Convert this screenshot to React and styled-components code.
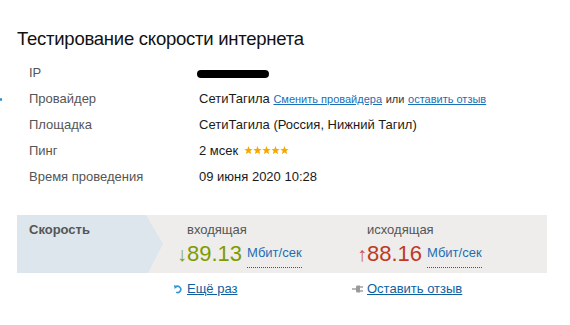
import React from "react";
import styled, { createGlobalStyle } from "styled-components";

const Global = createGlobalStyle`
  html, body { margin: 0; padding: 0; background: #fff; }
  body { font-family: "Liberation Sans", Arial, sans-serif; color: #222; }
`;

const Page = styled.div`
  position: relative;
  width: 570px;
  height: 325px;
  padding: 27px 0 0 17px;
  box-sizing: border-box;
`;

const EdgeDot = styled.span`
  position: absolute;
  left: 0;
  top: 98px;
  width: 2px;
  height: 3px;
  border-radius: 1px;
  background: #2a8fd0;
`;

const Title = styled.h1`
  margin: 0;
  font-size: 18.5px;
  letter-spacing: -0.25px;
  line-height: 24px;
  font-weight: normal;
  color: #111;
`;

const InfoTable = styled.div`
  display: grid;
  grid-template-columns: 170px 1fr;
  margin: 9px 0 0 12px;
`;

const Label = styled.div`
  font-size: 13px;
  line-height: 26px;
  color: #555;
`;

const Value = styled.div`
  font-size: 13px;
  line-height: 26px;
  color: #1a1a1a;
  white-space: nowrap;
`;

const Hidden = styled.span`
  display: inline-block;
  width: 72px;
  height: 8px;
  margin-left: -2px;
  border-radius: 4px;
  background: #000;
  vertical-align: -1px;
  filter: blur(0.4px);
`;

const SmallLink = styled.a`
  font-size: 11px;
  color: #1b6fb5;
  text-decoration: underline;
`;

const Small = styled.span`
  font-size: 11px;
  color: #333;
`;

const Stars = styled.svg`
  margin-left: 6px;
  vertical-align: 1px;
`;

const SpeedBox = styled.div`
  display: grid;
  grid-template-columns: 160px 180px 1fr;
  width: 530px;
  height: 58px;
  margin-top: 25px;
  background: #eeedeb;
`;

const SpeedLabel = styled.div`
  background: #dde5ed;
  clip-path: polygon(0 0, 129px 0, 146px 50%, 131px 100%, 0 100%);
  padding: 7px 0 0 12px;
  font-size: 13px;
  line-height: 16px;
  font-weight: bold;
  color: #555;
`;

const SpeedCell = styled.div`
  padding-top: 7px;
`;

const Caption = styled.div`
  padding-left: 10px;
  font-size: 13px;
  line-height: 16px;
  color: #555;
`;

const Reading = styled.div`
  margin-top: 3px;
  line-height: 26px;
  white-space: nowrap;
`;

const Arrow = styled.span`
  display: inline-block;
  width: 10px;
  font-size: 20px;
  line-height: 20px;
  color: ${(p) => p.$color};
`;

const Number = styled.span`
  font-size: 22px;
  color: ${(p) => p.$color};
`;

const Unit = styled.span`
  display: inline-block;
  margin-left: 5px;
  padding-bottom: 6px;
  font-size: 13px;
  line-height: 16px;
  color: #1b6fb5;
  border-bottom: 1px dotted #1b5f95;
  vertical-align: 4px;
`;

const LinksRow = styled.div`
  display: grid;
  grid-template-columns: 160px 180px 1fr;
  margin-top: 8px;
`;

const LinkItem = styled.div`
  grid-column: ${(p) => p.$col};
  display: flex;
  align-items: center;
  gap: ${(p) => p.$gap}px;
  margin-left: ${(p) => p.$shift}px;
`;

const ActionLink = styled.a`
  font-size: 13px;
  line-height: 16px;
  color: #0d5f9f;
  text-decoration: underline;
`;

function StarRow() {
  const star = (cx) => {
    const pts = [];
    for (let i = 0; i < 10; i++) {
      const r = i % 2 === 0 ? 4.4 : 1.9;
      const a = (Math.PI / 5) * i - Math.PI / 2;
      pts.push(`${(cx + r * Math.cos(a)).toFixed(2)},${(4.5 + r * Math.sin(a)).toFixed(2)}`);
    }
    return <polygon key={cx} points={pts.join(" ")} fill="#f6a800" />;
  };
  return (
    <Stars width="45" height="8" viewBox="0 0 45 8">
      {[4.5, 13.5, 22.5, 31.5, 40.5].map(star)}
    </Stars>
  );
}

function RefreshIcon() {
  return (
    <svg width="8" height="10" viewBox="0 0 8 10">
      <path d="M1.2 3.2 A3.2 3.2 0 1 1 2.2 8.3" fill="none" stroke="#2a9ad6" strokeWidth="1.6" />
      <polygon points="0,1 3.6,2.6 0.6,5" fill="#2a9ad6" />
    </svg>
  );
}

function PlugIcon() {
  return (
    <svg width="11" height="8" viewBox="0 0 11 8">
      <rect x="0" y="3.3" width="4" height="1.4" fill="#9a9a9a" />
      <path d="M4 1.5 Q4 0.5 5.5 0.5 L8 0.5 L8 7.5 L5.5 7.5 Q4 7.5 4 6.5 Z" fill="#9a9a9a" />
      <rect x="8" y="1.3" width="3" height="1.4" fill="#9a9a9a" />
      <rect x="8" y="5.3" width="3" height="1.4" fill="#9a9a9a" />
    </svg>
  );
}

export default function App() {
  return (
    <>
      <Global />
      <Page>
        <EdgeDot />
        <Title>Тестирование скорости интернета</Title>
        <InfoTable>
          <Label>IP</Label>
          <Value><Hidden /></Value>
          <Label>Провайдер</Label>
          <Value>
            СетиТагила <SmallLink href="#">Сменить провайдера</SmallLink> <Small>или</Small>{" "}
            <SmallLink href="#">оставить отзыв</SmallLink>
          </Value>
          <Label>Площадка</Label>
          <Value>СетиТагила (Россия, Нижний Тагил)</Value>
          <Label>Пинг</Label>
          <Value>2 мсек<StarRow /></Value>
          <Label>Время проведения</Label>
          <Value>09 июня 2020 10:28</Value>
        </InfoTable>
        <SpeedBox>
          <SpeedLabel>Скорость</SpeedLabel>
          <SpeedCell>
            <Caption>входящая</Caption>
            <Reading>
              <Arrow $color="#86a51c">↓</Arrow>
              <Number $color="#7c9c00">89.13</Number>
              <Unit>Мбит/сек</Unit>
            </Reading>
          </SpeedCell>
          <SpeedCell>
            <Caption>исходящая</Caption>
            <Reading>
              <Arrow $color="#d0553f">↑</Arrow>
              <Number $color="#bf3a22">88.16</Number>
              <Unit>Мбит/сек</Unit>
            </Reading>
          </SpeedCell>
        </SpeedBox>
        <LinksRow>
          <LinkItem $col={2} $gap={5} $shift={-3}>
            <RefreshIcon />
            <ActionLink href="#">Ещё раз</ActionLink>
          </LinkItem>
          <LinkItem $col={3} $gap={4} $shift={-5}>
            <PlugIcon />
            <ActionLink href="#">Оставить отзыв</ActionLink>
          </LinkItem>
        </LinksRow>
      </Page>
    </>
  );
}
